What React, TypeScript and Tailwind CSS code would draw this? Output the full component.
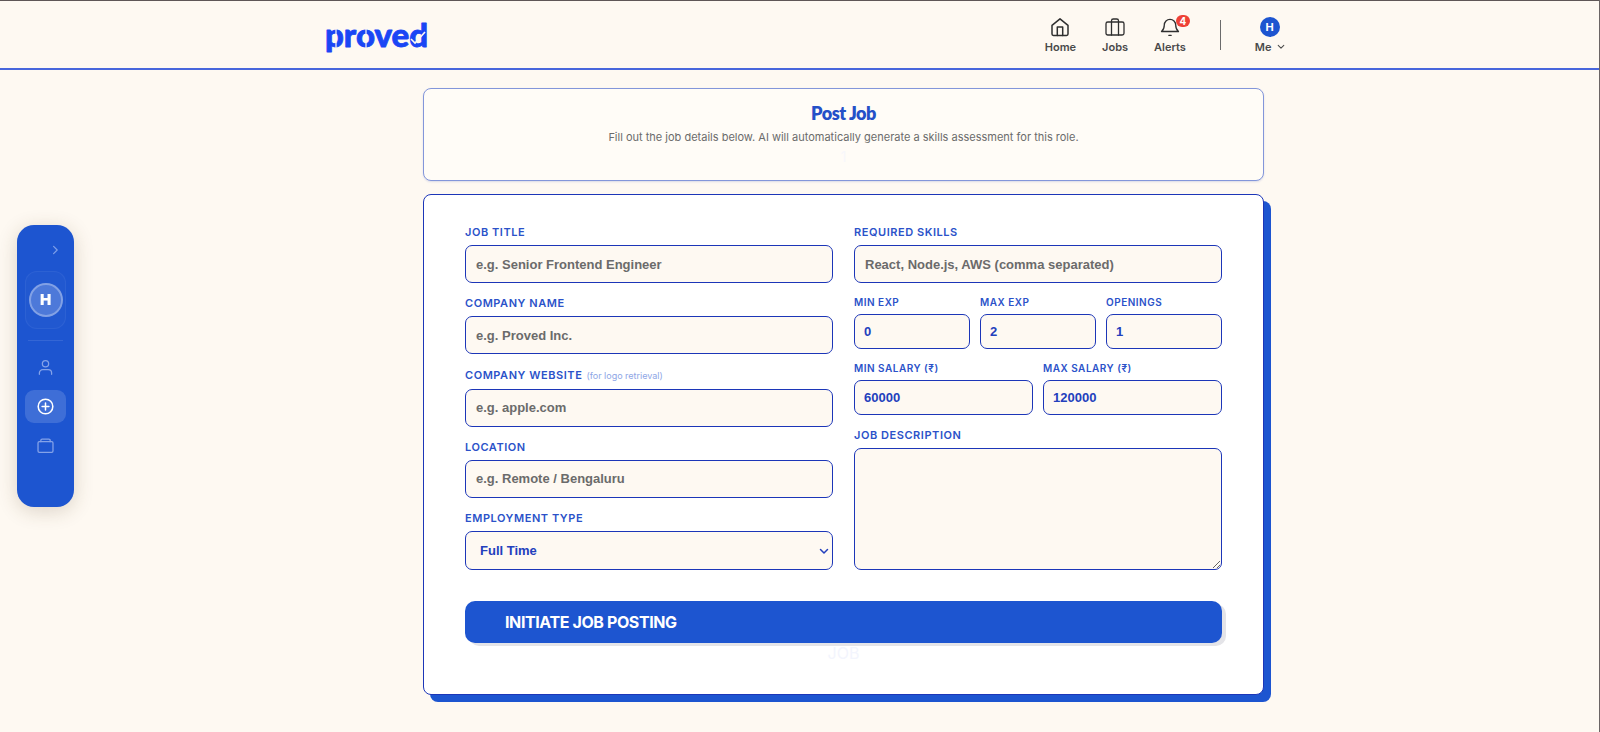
import React from "react";

const fieldBox =
  "block w-full rounded-[7px] border border-[#1c36b8] bg-[#fef9f2] font-['Liberation_Sans',sans-serif] font-bold text-[#2340bd] outline-none placeholder:text-[#6b6b6b] placeholder:opacity-100";

function Logo() {
  return (
    <svg width="112" height="50" viewBox="0 0 112 50" role="img" aria-label="proved">
      <text
        x="0"
        y="37"
        fontFamily="Lato, sans-serif"
        fontWeight="900"
        fontSize="33"
        fill="#1a46f5"
        stroke="#1a46f5"
        strokeWidth="0.800"
        strokeLinejoin="round"
      >
        proved
      </text>
      <g stroke="#fef9f2" strokeWidth="1.200" fill="none">
        <path d="M11 18v7M11 32v7M41 18v7M41 31v8" />
      </g>
      <path d="M86 29l4 4 10-11" stroke="#fef9f2" strokeWidth="1.600" fill="none" />
    </svg>
  );
}

type IconProps = { children: React.ReactNode; size?: number; width?: number };
function Icon({ children, size = 20, width = 1.3 }: IconProps) {
  return (
    <svg
      width={size}
      height={size}
      viewBox="0 0 20 20"
      fill="none"
      stroke="currentColor"
      strokeWidth={width}
      strokeLinecap="round"
      strokeLinejoin="round"
      aria-hidden="true"
    >
      {children}
    </svg>
  );
}

function NavItem({ label, children }: { label: string; children: React.ReactNode }) {
  return (
    <a href="#" className="flex flex-col items-center gap-[2px] text-[#2f2f2f]">
      <span className="relative">{children}</span>
      <span className="text-[11px] leading-4 font-semibold text-[#4a4a4a]">{label}</span>
    </a>
  );
}

function Header() {
  return (
    <header className="h-[70px] border-t border-b-2 border-t-[#5f5757] border-b-[#4866dc]">
      <div className="mx-auto flex h-full max-w-[970px] items-start justify-between pl-[10px]">
        <a href="#" className="mt-[9px]">
          <Logo />
        </a>
        <nav className="mt-4 flex items-start gap-[34px]">
          <div className="flex gap-[26px]">
            <NavItem label="Home">
              <Icon width={1.5}>
                <path d="M2 8.300 10 1.800l8 6.500V17a1.400 1.400 0 0 1-1.400 1.400H3.400A1.400 1.400 0 0 1 2 17z" />
                <path d="M7.300 18.400v-8.400h5.400v8.400" />
              </Icon>
            </NavItem>
            <NavItem label="Jobs">
              <Icon>
                <rect x="1" y="5" width="18" height="13" rx="1.800" />
                <path d="M6.500 18V3.800A1.800 1.800 0 0 1 8.300 2h3.400a1.800 1.800 0 0 1 1.800 1.800V18" />
              </Icon>
            </NavItem>
            <NavItem label="Alerts">
              <Icon>
                <path d="M1.500 14.500c2-1.600 2.800-3.300 2.800-6.500a5.700 5.700 0 0 1 11.400 0c0 3.200.8 4.900 2.800 6.500z" />
                <path d="M8.800 18.300h2.400" />
              </Icon>
              <span className="absolute -top-[2px] left-4 flex h-3 w-[14px] items-center justify-center rounded-full bg-[#ee4136] text-[10px] font-bold text-white">
                4
              </span>
            </NavItem>
          </div>
          <span className="mt-[3px] h-[30px] w-px bg-[#6b6b6b]" />
          <button type="button" className="flex flex-col items-center gap-[2px]">
            <span className="flex h-5 w-5 items-center justify-center rounded-full bg-[#1d55d0] text-[11px] font-bold text-white">
              H
            </span>
            <span className="flex items-center gap-[5px] text-[11px] leading-4 font-semibold text-[#4a4a4a]">
              Me
              <Icon size={8} width={2.6}>
                <path d="m3 6 7 7 7-7" />
              </Icon>
            </span>
          </button>
        </nav>
      </div>
    </header>
  );
}

function Sidebar() {
  return (
    <aside className="fixed top-1/2 left-[17px] flex h-[282px] w-[57px] -translate-y-1/2 flex-col items-center rounded-[17px] bg-[#1d55d0] px-2 shadow-[0_4px_20px_rgba(80,60,30,0.2)]">
      <button type="button" aria-label="Expand" className="mt-[19px] mr-1 self-end text-[#7f9fe8]">
        <Icon size={12} width={2}>
          <path d="m6 4 6 6-6 6" />
        </Icon>
      </button>
      <div className="mt-[15px] flex h-[58px] w-full shrink-0 items-center justify-center rounded-xl border border-white/5 bg-white/[0.02]">
        <span className="flex h-[34px] w-[34px] items-center justify-center rounded-full border-2 border-white/30 bg-white/20 text-[15px] font-black text-white">
          H
        </span>
      </div>
      <div className="mt-[11px] h-px w-[35px] shrink-0 bg-white/10" />
      <a href="#" aria-label="Profile" className="mt-[10px] flex h-[33px] w-full items-center justify-center text-[#84a2e8]">
        <Icon size={17} width={1.5}>
          <circle cx="10" cy="5.500" r="3.700" />
          <path d="M2.800 18v-1.500a4 4 0 0 1 4-4h6.400a4 4 0 0 1 4 4V18" />
        </Icon>
      </a>
      <a href="#" aria-label="Post job" className="mt-[6px] flex h-[33px] w-full items-center justify-center rounded-[9px] bg-white/15 text-white">
        <Icon size={17} width={1.8}>
          <circle cx="10" cy="10" r="8.600" />
          <path d="M10 6v8M6 10h8" />
        </Icon>
      </a>
      <a href="#" aria-label="My jobs" className="mt-[6px] flex h-[33px] w-full items-center justify-center text-[#84a2e8]">
        <Icon size={17} width={1.5}>
          <rect x="1.200" y="5.500" width="17.600" height="12.500" rx="1.500" />
          <path d="M4.500 5.500V4A1.500 1.500 0 0 1 6 2.500h8A1.500 1.500 0 0 1 15.500 4v1.500" />
        </Icon>
      </a>
    </aside>
  );
}

type FieldProps = {
  id: string;
  label: string;
  note?: string;
  children: React.ReactNode;
  grow?: boolean;
};
function Field({ id, label, note, children, grow }: FieldProps) {
  return (
    <div className={grow ? "flex flex-1 flex-col gap-[5px]" : "flex flex-col gap-[5px]"}>
      <label htmlFor={id} className="text-[11px] leading-4 font-semibold tracking-wider text-[#2b52c9]">
        {label}
        {note && <span className="ml-1 text-[9px] font-normal tracking-normal text-[#8ea6e6]">{note}</span>}
      </label>
      {children}
    </div>
  );
}

function TextField({ id, label, note, placeholder }: { id: string; label: string; note?: string; placeholder: string }) {
  return (
    <Field id={id} label={label} note={note}>
      <input id={id} type="text" placeholder={placeholder} className={`${fieldBox} h-[38px] px-[10px] text-[13px]`} />
    </Field>
  );
}

function NumberField({ id, label, value }: { id: string; label: string; value: string }) {
  return (
    <div className="flex min-w-0 flex-1 flex-col gap-1">
      <label htmlFor={id} className="text-[10px] leading-[15px] font-semibold tracking-wider text-[#2b52c9]">
        {label}
      </label>
      <input id={id} type="text" inputMode="numeric" defaultValue={value} className={`${fieldBox} h-[35px] px-[9px] text-[13px]`} />
    </div>
  );
}

export default function App() {
  return (
    <div className="min-h-screen border-r border-[#6b6565] bg-[#fef9f2] font-['Inter',sans-serif]">
      <Header />
      <Sidebar />
      <main className="pt-[18px] pr-4 pb-[30px] pl-[104px]">
        <div className="mx-auto flex max-w-[841px] flex-col gap-[13px]">
          <section className="flex h-[93px] flex-col items-center rounded-lg border border-[#8396da] bg-[#fffcf7] pt-3 shadow-[0_1px_2px_rgba(30,60,180,0.15)]">
            <h1 className="font-['Lato',sans-serif] text-lg leading-6 font-extrabold tracking-tight text-[#2450c8]">Post Job</h1>
            <p className="mt-1 text-[11px] leading-4 text-[#6b6b6b]">
              Fill out the job details below. AI will automatically generate a skills assessment for this role.
            </p>
            <span className="mt-1 text-sm leading-4 text-[#f7f7fb]">1</span>
          </section>

          <form className="rounded-lg border border-[#1c36b8] bg-white px-[41px] pt-[29px] pb-[31px] shadow-[7px_7px_0_#1d55d0]">
            <div className="grid grid-cols-2 gap-[21px]">
              <div className="flex h-[346px] flex-col justify-between">
                <TextField id="title" label="JOB TITLE" placeholder="e.g. Senior Frontend Engineer" />
                <TextField id="company" label="COMPANY NAME" placeholder="e.g. Proved Inc." />
                <TextField id="website" label="COMPANY WEBSITE" note="(for logo retrieval)" placeholder="e.g. apple.com" />
                <TextField id="location" label="LOCATION" placeholder="e.g. Remote / Bengaluru" />
                <Field id="type" label="EMPLOYMENT TYPE">
                  <div className="relative">
                    <select id="type" className={`${fieldBox} h-[39px] appearance-none px-[14px] text-[13px]`}>
                      <option>Full Time</option>
                    </select>
                    <span className="pointer-events-none absolute top-1/2 right-1 -translate-y-1/2 text-[#2340bd]">
                      <Icon size={10} width={3}>
                        <path d="m3 7 7 7 7-7" />
                      </Icon>
                    </span>
                  </div>
                </Field>
              </div>
              <div className="flex flex-col gap-3">
                <TextField id="skills" label="REQUIRED SKILLS" placeholder="React, Node.js, AWS (comma separated)" />
                <div className="flex gap-[10px]">
                  <NumberField id="minexp" label="MIN EXP" value="0" />
                  <NumberField id="maxexp" label="MAX EXP" value="2" />
                  <NumberField id="openings" label="OPENINGS" value="1" />
                </div>
                <div className="flex gap-[10px]">
                  <NumberField id="minsal" label="MIN SALARY (₹)" value="60000" />
                  <NumberField id="maxsal" label="MAX SALARY (₹)" value="120000" />
                </div>
                <Field id="description" label="JOB DESCRIPTION" grow>
                  <textarea id="description" className={`${fieldBox} flex-1 resize p-[10px] text-[13px]`} />
                </Field>
              </div>
            </div>
            <button
              type="submit"
              className="mt-[31px] block h-[42px] w-full rounded-[10px] bg-[#1d55d0] px-10 text-left text-base font-bold tracking-tight text-white shadow-[4px_3px_0_#e4e4e8]"
            >
              INITIATE JOB POSTING
            </button>
            <div className="text-center text-base leading-5 text-[#f3f5fd]">JOB</div>
          </form>
        </div>
      </main>
    </div>
  );
}
